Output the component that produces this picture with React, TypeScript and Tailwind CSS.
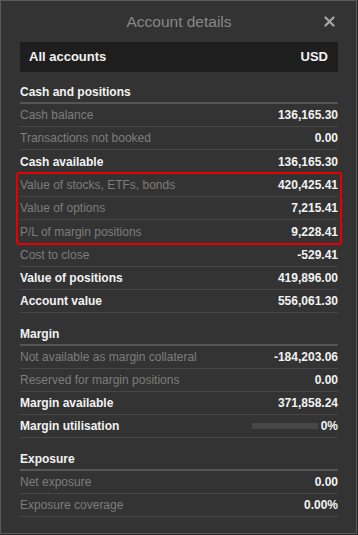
import React from "react";

type Row = { label: string; value: string; bold?: boolean; bar?: boolean };

function DataRow({ r, last }: { r: Row; last?: boolean }) {
  return (
    <div
      className={`flex h-[23px] items-center justify-between text-[12px] ${
        last ? "h-[22px]" : "border-b border-[#474747]"
      }`}
    >
      <span className={r.bold ? "font-bold text-[#f2f2f2]" : "text-[#7d7d7d]"}>{r.label}</span>
      <span className="flex items-center gap-[3px] font-bold text-[#f2f2f2]">
        {r.bar && <span className="block h-[6px] w-[66px] bg-[#474747]" />}
        {r.value}
      </span>
    </div>
  );
}

function Heading({ title }: { title: string }) {
  return (
    <div className="flex h-[23px] items-center border-b-2 border-[#555555] text-[12px] font-bold text-[#f2f2f2]">
      {title}
    </div>
  );
}

export default function App() {
  return (
    <div className="h-[535px] w-[358px] bg-[#262626]" style={{ fontFamily: '"Liberation Sans", Arial, sans-serif' }}>
      <div className="flex h-[534px] w-[357px] flex-col border border-[#5a5a5a] bg-[#333333] pl-[19px] pr-[18px]">
        <div className="relative flex h-[41px] items-center justify-center">
          <span className="text-[15.5px] text-[#888888]">Account details</span>
          <svg
            className="absolute right-[3px] top-[15px]"
            width="11"
            height="11"
            viewBox="0 0 11 11"
          >
            <path d="M1.5 1.5 L9.5 9.5 M9.5 1.5 L1.5 9.5" stroke="#a8a8a8" strokeWidth="2.2" strokeLinecap="round" />
          </svg>
        </div>
        <div className="flex h-[30px] items-center justify-between bg-[#1e1e1e] pl-[9px] pr-[10px] text-[13px] font-bold text-[#f2f2f2]">
          <span>All accounts</span>
          <span>USD</span>
        </div>

        <div className="mt-[9px]">
          <Heading title="Cash and positions" />
          <DataRow r={{ label: "Cash balance", value: "136,165.30" }} />
          <DataRow r={{ label: "Transactions not booked", value: "0.00" }} />
          <DataRow r={{ label: "Cash available", value: "136,165.30", bold: true }} last />
          <div className="-mx-[4px] -my-px rounded-[3px] border-2 border-[#e60000] px-[2px]">
            <DataRow r={{ label: "Value of stocks, ETFs, bonds", value: "420,425.41" }} />
            <DataRow r={{ label: "Value of options", value: "7,215.41" }} />
            <DataRow r={{ label: "P/L of margin positions", value: "9,228.41" }} last />
          </div>
          <DataRow r={{ label: "Cost to close", value: "-529.41" }} />
          <DataRow r={{ label: "Value of positions", value: "419,896.00", bold: true }} />
          <DataRow r={{ label: "Account value", value: "556,061.30", bold: true }} />
        </div>

        <div className="mt-[10px]">
          <Heading title="Margin" />
          <DataRow r={{ label: "Not available as margin collateral", value: "-184,203.06" }} />
          <DataRow r={{ label: "Reserved for margin positions", value: "0.00" }} />
          <DataRow r={{ label: "Margin available", value: "371,858.24", bold: true }} />
          <DataRow r={{ label: "Margin utilisation", value: "0%", bold: true, bar: true }} />
        </div>

        <div className="mt-[10px]">
          <Heading title="Exposure" />
          <DataRow r={{ label: "Net exposure", value: "0.00" }} />
          <DataRow r={{ label: "Exposure coverage", value: "0.00%" }} />
        </div>
      </div>
    </div>
  );
}
